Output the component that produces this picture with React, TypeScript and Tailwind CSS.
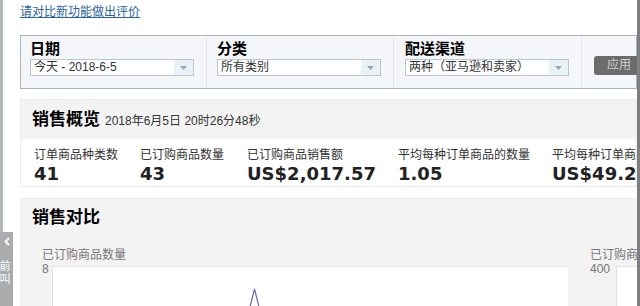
import React from "react";

const cjk = "font-['Liberation_Sans','Noto_Sans_CJK_SC',sans-serif]";
const num = "font-['DejaVu_Sans','Noto_Sans_CJK_SC',sans-serif]";

function Select({ value, width }: { value: string; width: string }) {
  return (
    <div className={`flex h-[17px] ${width} border border-[#b9c9d2] bg-white`}>
      <div className="flex-1 pl-[3px] text-[12px] leading-[15px] text-[#333] whitespace-nowrap overflow-hidden">
        {value}
      </div>
      <div className="flex w-[19px] items-center justify-center bg-[#e9f2f7]">
        <svg width="7" height="4" viewBox="0 0 7 4">
          <path d="M0 0 L7 0 L3.5 4 Z" fill="#9aa6ad" />
        </svg>
      </div>
    </div>
  );
}

function Filter({
  label,
  value,
  pl,
  width,
  divider = true,
}: {
  label: string;
  value: string;
  pl: string;
  width: string;
  divider?: boolean;
}) {
  return (
    <div
      className={`flex flex-col ${pl} ${divider ? "border-r border-[#e3e7eb]" : ""}`}
    >
      <div className="mt-[4px] text-[15px] font-bold leading-[17px] text-black">
        {label}
      </div>
      <div className="mt-[2px]">
        <Select value={value} width={width} />
      </div>
    </div>
  );
}

function Stat({ label, value, w }: { label: string; value: string; w: string }) {
  return (
    <div className={`${w} shrink-0 flex flex-col whitespace-nowrap`}>
      <div className="text-[12px] leading-[14px] text-[#333]">{label}</div>
      <div className={`${num} mt-[2px] text-[18px] font-bold leading-[20px] text-[#222]`}>
        {value}
      </div>
    </div>
  );
}

export default function App() {
  return (
    <div className={`${cjk} relative flex h-[306px] w-[640px] overflow-hidden bg-white`}>
      <div className="w-[3px] shrink-0 bg-[#b3b7ba]" />

      <main className="flex min-w-0 flex-1 flex-col pl-[17px]">
        <a className="mt-[5px] block h-[14px] text-[12px] leading-[14px] text-[#2a63a0] underline">
          请对比新功能做出评价
        </a>

        <section className="mt-[16px] grid h-[60px] grid-cols-[186px_187px_187px_1fr] border border-[#a7b4bb] bg-[#f4f6f9]">
          <Filter label="日期" value="今天 - 2018-6-5" pl="pl-[9px]" width="w-[164px]" />
          <Filter label="分类" value="所有类别" pl="pl-[10px]" width="w-[164px]" />
          <Filter label="配送渠道" value="两种（亚马逊和卖家）" pl="pl-[11px]" width="w-[164px]" divider={false} />
          <div className="flex items-start border-l border-[#e3e7eb] pl-[12px] pt-[20px]">
            <button className="h-[19px] w-[50px] shrink-0 rounded-[3px] bg-[#6c6c6c] text-[12px] leading-[19px] text-[#cfcfcf]">
              应用
            </button>
          </div>
        </section>

        <section className="mt-[10px] border border-[#ececec]">
          <div className="flex h-[39px] items-center bg-[#f3f3f3] pl-[11px]">
            <span className="text-[17px] font-bold text-black">销售概览</span>
            <span className="ml-[5px] mt-[2px] text-[12px] text-[#333]">
              2018年6月5日 20时26分48秒
            </span>
          </div>
          <div className="flex h-[47px] bg-white pl-[13px] pt-[9px]">
            <Stat label="订单商品种类数" value="41" w="w-[106px]" />
            <Stat label="已订购商品数量" value="43" w="w-[107px]" />
            <Stat label="已订购商品销售额" value="US$2,017.57" w="w-[151px]" />
            <Stat label="平均每种订单商品的数量" value="1.05" w="w-[154px]" />
            <Stat label="平均每种订单商品的销售额" value="US$49.21" w="w-[160px]" />
          </div>
        </section>

        <section className="mt-[11px] flex-1 border-t border-[#ececec] bg-[#f3f3f3]">
          <div className="pl-[12px] pt-[9px] text-[17px] font-bold leading-[20px] text-black">
            销售对比
          </div>
          <div className="mt-[20px] flex">
            <div className="ml-[22px] flex w-[526px] shrink-0 flex-col">
              <div className="text-[12px] leading-[14px] text-[#777]">已订购商品数量</div>
              <div className="flex">
                <div className="w-[11px] text-[12px] leading-[14px] text-[#777]">8</div>
                <div className="mt-[4px] h-[40px] flex-1 border-l border-t border-[#e2e2e2] bg-white">
                  <svg width="515" height="40" viewBox="0 0 515 40">
                    <polyline
                      points="197,40 201.5,22 206,40"
                      fill="none"
                      stroke="#6a6aa8"
                      strokeWidth="1.2"
                    />
                  </svg>
                </div>
              </div>
            </div>
            <div className="ml-[22px] flex min-w-0 flex-1 flex-col overflow-hidden">
              <div className="whitespace-nowrap text-[12px] leading-[14px] text-[#777]">
                已订购商品销售额
              </div>
              <div className="flex">
                <div className="w-[26px] shrink-0 text-[12px] leading-[14px] text-[#777]">400</div>
                <div className="mt-[4px] h-[40px] flex-1 border-l border-t border-[#e2e2e2] bg-white" />
              </div>
            </div>
          </div>
        </section>
      </main>

      <div className="w-[3px] shrink-0 bg-[#7d7f80]" />

      <div className="absolute left-0 top-[232px] flex h-[74px] w-[13px] flex-col items-center overflow-hidden bg-[#a9abac]">
        <svg className="mt-[5px]" width="6" height="9" viewBox="0 0 6 9">
          <path d="M5 1 L1.5 4.5 L5 8" fill="none" stroke="#fff" strokeWidth="1.8" />
        </svg>
        <div className="ml-[-3px] mt-[14px] flex flex-col text-[11px] leading-[13px] text-white">
          <span>前</span>
          <span>叫</span>
        </div>
      </div>
    </div>
  );
}
